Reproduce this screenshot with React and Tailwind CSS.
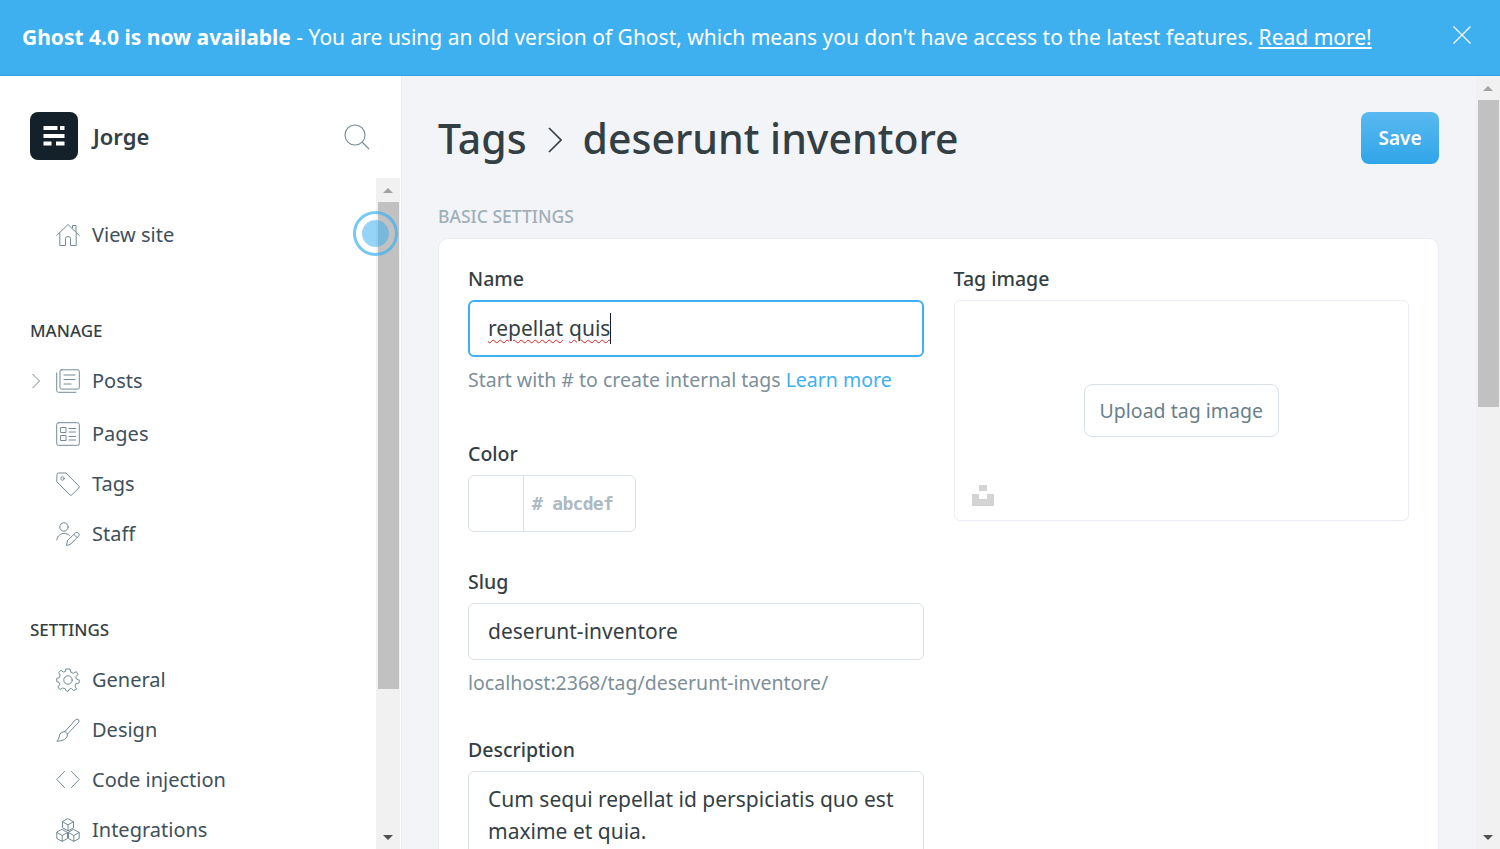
const sans = { };

function Icon({ children, className = "" }) {
  return (
    <svg viewBox="0 0 24 24" fill="none" stroke="#738a94" strokeWidth="1" strokeLinecap="round" strokeLinejoin="round" className={"w-6 h-6 shrink-0 " + className}>
      {children}
    </svg>
  );
}

const HomeIcon = () => (
  <Icon>
    <path d="M0.7 12.5 L12 1.5 L23.3 12.5" />
    <path d="M3.8 10 V22.5 H9.5 V15.5 Q9.5 13.5 12 13.5 Q14.5 13.5 14.5 15.5 V22.5 H20.2 V10" />
    <path d="M16.5 5 V2.5 H20 V8.5" />
  </Icon>
);
const PostsIcon = () => (
  <Icon>
    <rect x="4" y="0.8" width="19.3" height="19.3" rx="1.5" />
    <path d="M0.7 4 V21.5 Q0.7 23.3 2.5 23.3 H20" />
    <path d="M8 6 H19 M8 10.5 H19 M8 15 H15" />
  </Icon>
);
const PagesIcon = () => (
  <Icon>
    <rect x="0.7" y="0.7" width="22.6" height="22.6" rx="2" />
    <rect x="5" y="5.5" width="5" height="5" />
    <rect x="5" y="13.5" width="5" height="5" />
    <path d="M13 6.5 H19.5 M13 10 H19.5 M13 14.5 H19.5 M13 18 H19.5" />
  </Icon>
);
const TagIcon = () => (
  <Icon>
    <path d="M1 2.5 Q1 1 2.5 1 H10 L23 14.2 Q23.6 15 23 15.8 L15.6 23 Q14.8 23.6 14 23 L1 10 Z" />
    <circle cx="6.5" cy="6.5" r="1.7" />
  </Icon>
);
const StaffIcon = () => (
  <Icon>
    <circle cx="8" cy="5" r="4.2" />
    <path d="M0.8 18 C1.5 13 5 11.5 8 11.5 C10 11.5 12 12 13.5 13.5" />
    <path d="M10.5 23.3 L11.5 18.5 L19.5 10.8 Q21 9.5 22.5 11 Q24 12.5 22.7 14 L15 21.8 Z" />
    <path d="M18 12.5 L21 15.5" />
  </Icon>
);
const GearIcon = () => (
  <Icon>
    <circle cx="12" cy="12" r="4.2" />
    <path d="M10 1 H14 L14.8 4.2 L17.4 5.3 L20.2 3.6 L22 6.5 L19.8 8.8 L20.4 11 L23.3 12 L23 15 L20 15.8 L19 18.2 L20.6 21 L17.6 22.6 L15.4 20.4 L13.5 21 L12 23.3 L10.3 23 L9 20.6 L6.6 20 L4 21.6 L1.8 19 L3.8 16.6 L3 14.5 L0.7 13.5 V10.5 L3.4 9.5 L4.2 7 L2.6 4.6 L5 2.4 L7.6 4 L9.4 3.4 Z" />
  </Icon>
);
const BrushIcon = () => (
  <Icon>
    <path d="M9 13.5 L19.5 1.8 Q21 0.5 22.5 1.6 Q23.8 3 22.5 4.5 L11.5 16" />
    <path d="M9 13.5 L11.5 16 Q12 19.5 8.5 21.5 Q5 23.3 0.8 23.2 Q3 21.5 3.3 18 Q3.8 14 9 13.5 Z" />
  </Icon>
);
const CodeIcon = () => (
  <Icon>
    <path d="M8.5 3.5 L0.8 11.5 L8.5 19.5 M15.5 3.5 L23.2 11.5 L15.5 19.5" />
  </Icon>
);
const BoxesIcon = () => (
  <Icon>
    <path d="M12 0.8 L17.5 3.8 V9.8 L12 12.8 L6.5 9.8 V3.8 Z M6.5 3.8 L12 6.8 L17.5 3.8 M12 6.8 V12.8" />
    <path d="M6.2 11.5 L11.5 14.5 V20.5 L6.2 23.4 L0.8 20.5 V14.5 Z M0.8 14.5 L6.2 17.5 L11.5 14.5 M6.2 17.5 V23.4" />
    <path d="M17.8 11.5 L23.2 14.5 V20.5 L17.8 23.4 L12.5 20.5 V14.5 Z M12.5 14.5 L17.8 17.5 L23.2 14.5 M17.8 17.5 V23.4" />
  </Icon>
);

function NavItem({ icon, label, chevron, className = "" }) {
  return (
    <div className={"relative flex items-center h-[50px] pl-[56px] gap-3 text-[#40505a] " + className}>
      {chevron && (
        <svg viewBox="0 0 10 16" fill="none" stroke="#738a94" strokeWidth="1" className="absolute left-[31px] w-[10px] h-4">
          <path d="M1.5 1 L8.5 8 L1.5 15" />
        </svg>
      )}
      {icon}
      <span className="text-[20px] leading-[30px]">{label}</span>
    </div>
  );
}

function Scrollbar({ top, thumbH, className = "" }) {
  return (
    <div className={"w-6 shrink-0 flex flex-col items-center bg-[#f1f1f1] overflow-hidden " + className}>
      <div className="h-6 shrink-0 flex items-center justify-center">
        <div className="w-0 h-0 border-x-[5px] border-x-transparent border-b-[5px] border-b-[#a3a3a3]" />
      </div>
      <div className="w-[21px] shrink-0 bg-[#c1c1c1]" style={{ marginTop: top, height: thumbH }} />
      <div className="mt-auto h-6 shrink-0 flex items-center justify-center">
        <div className="w-0 h-0 border-x-[5px] border-x-transparent border-t-[5px] border-t-[#505050]" />
      </div>
    </div>
  );
}

function Label({ children }) {
  return <label className="block text-[19.5px] leading-[26px] font-medium text-[#343f44] mb-[8px]">{children}</label>;
}

export default function App() {
  return (
    <div className="h-screen flex flex-col overflow-hidden bg-white font-['Noto_Sans','Open_Sans',sans-serif] text-[#343f44]">
      <div className="h-[76px] shrink-0 flex items-center bg-[#3eb0ef] border-b border-[#2fa0df] text-white pl-[22px] pr-[29px]">
        <p className="flex-1 text-[21px] leading-[28px] pb-[1px] whitespace-nowrap">
          <b className="font-bold">Ghost 4.0 is now available</b> - You are using an old version of Ghost, which means you don't have access to the latest features. <a className="underline">Read more!</a>
        </p>
        <svg viewBox="0 0 18 18" stroke="white" strokeWidth="1.2" className="w-[18px] h-[18px] -mt-[5px]">
          <path d="M0.5 0.5 L17.5 17.5 M17.5 0.5 L0.5 17.5" />
        </svg>
      </div>

      <div className="flex-1 min-h-0 flex">
        <aside className="relative w-[402px] shrink-0 flex flex-col bg-white border-r border-[#e5eff5]">
          <div className="h-[102px] shrink-0 flex items-start pt-[36px] pl-[30px] pr-[31px]">
            <div className="w-12 h-12 rounded-[8px] bg-[#15212a] flex items-center justify-center">
              <svg viewBox="0 0 22 20" fill="white" className="w-[22px] h-5">
                <rect x="0.5" y="0" width="14" height="4" />
                <rect x="17" y="0" width="4.5" height="4" />
                <rect x="0.5" y="8" width="21" height="4" />
                <rect x="0.5" y="15.5" width="8" height="4" />
                <rect x="13" y="15.5" width="8.5" height="4" />
              </svg>
            </div>
            <span className="ml-[15px] mt-[8px] text-[22px] leading-[32px] font-semibold text-[#343f44]">Jorge</span>
            <svg viewBox="0 0 26 26" fill="none" stroke="#738a94" strokeWidth="1.1" className="ml-auto mt-[12px] w-[26px] h-[26px]">
              <circle cx="11" cy="11" r="10" />
              <path d="M18 18 L25 25" />
            </svg>
          </div>

          <div className="flex-1 min-h-0 flex">
            <nav className="flex-1 min-w-0 overflow-hidden pt-[32px]">
              <NavItem icon={<HomeIcon />} label="View site" />
              <h3 className="mt-[46px] pl-[30px] h-[50px] text-[17px] leading-[50px] font-medium text-[#343f44]">MANAGE</h3>
              <NavItem icon={<PostsIcon />} label="Posts" chevron className="mb-[3px]" />
              <NavItem icon={<PagesIcon />} label="Pages" />
              <NavItem icon={<TagIcon />} label="Tags" />
              <NavItem icon={<StaffIcon />} label="Staff" />
              <h3 className="mt-[46px] pl-[30px] h-[50px] text-[17px] leading-[50px] font-medium text-[#343f44]">SETTINGS</h3>
              <NavItem icon={<GearIcon />} label="General" />
              <NavItem icon={<BrushIcon />} label="Design" />
              <NavItem icon={<CodeIcon />} label="Code injection" />
              <NavItem icon={<BoxesIcon />} label="Integrations" />
            </nav>
            <Scrollbar top={0} thumbH={487} className="mr-px" />
          </div>

          <div className="absolute left-[353px] top-[135px] w-[45px] h-[45px] rounded-full border-[3px] border-[#3eb0ef]/70 flex items-center justify-center">
            <div className="w-[27px] h-[27px] rounded-full bg-[#3eb0ef]/55" />
          </div>
        </aside>

        <main className="flex-1 min-w-0 bg-[#f2f4f8] overflow-hidden pl-[36px] pr-[37px]">
          <div className="flex items-start justify-between pt-[36px] h-[122px]">
            <h1 className="flex items-center text-[41px] leading-[52px] font-medium text-[#343f44]">
              Tags
              <svg viewBox="0 0 14 26" fill="none" stroke="#343f44" strokeWidth="1.6" className="w-[14px] h-[26px] mx-[21px] mt-[4px]">
                <path d="M1 1 L13 13 L1 25" />
              </svg>
              deserunt inventore
            </h1>
            <button className="w-[78px] h-[52px] rounded-[8px] bg-gradient-to-b from-[#58b9f0] to-[#2ea5e8] text-white text-[19px] font-semibold">Save</button>
          </div>

          <h4 className="h-[40px] text-[17.5px] leading-[36px] font-medium text-[#a0afb8]">BASIC SETTINGS</h4>

          <section className="bg-white rounded-[10px] border border-[#e8eef3] px-[29px] pt-[27px] pb-8 grid grid-cols-2 gap-x-[30px] items-start">
            <div>
              <Label>Name</Label>
              <div className="h-[57px] rounded-[6px] border-2 border-[#3eb0ef] px-[18px] flex items-center text-[21px] text-[#343f44]">
                <span className="underline decoration-wavy decoration-[#e02020] decoration-1 underline-offset-[3px]">repellat</span>
                <span className="ml-[6px] underline decoration-wavy decoration-[#e02020] decoration-1 underline-offset-[3px]">quis</span>
                <span className="w-px h-[31px] bg-[#15212a]" />
              </div>
              <p className="mt-[8px] h-[50px] text-[19.5px] leading-[30px] text-[#7d8f99] whitespace-nowrap">
                Start with # to create internal tags <a className="text-[#3eb0ef]">Learn more</a>
              </p>

              <div className="mt-[26px]">
                <Label>Color</Label>
                <div className="w-[168px] h-[57px] flex rounded-[6px] border border-[#dae2e7]">
                  <div className="w-[55px] border-r border-[#dae2e7]" />
                  <div className="pl-[8px] flex items-center text-[18px] font-semibold font-['DejaVu_Sans_Mono',monospace] tracking-[-0.7px] text-[#aebac2]">
                    # abcdef
                  </div>
                </div>
              </div>

              <div className="mt-[37px]">
                <Label>Slug</Label>
                <div className="h-[57px] rounded-[6px] border border-[#dae2e7] px-[19px] flex items-center text-[21px]">deserunt-inventore</div>
                <p className="mt-[8px] text-[19.5px] leading-[30px] text-[#7d8f99]">localhost:2368/tag/deserunt-inventore/</p>
              </div>

              <div className="mt-[39px]">
                <Label>Description</Label>
                <div className="h-[140px] rounded-[6px] border border-[#dae2e7] px-[19px] py-[11px] text-[21px] leading-[32px]">
                  Cum sequi repellat id perspiciatis quo est maxime et quia.
                </div>
              </div>
            </div>

            <div>
              <Label>Tag image</Label>
              <div className="relative h-[221px] rounded-[6px] border border-[#e8eef3] flex items-center justify-center">
                <button className="w-[195px] h-[53px] rounded-[8px] border border-[#dae2e7] bg-white text-[19.5px] text-[#6a7f8a]">Upload tag image</button>
                <svg viewBox="0 0 22 21" fill="#d4d4d4" className="absolute left-[17px] bottom-[14px] w-[22px] h-[21px]">
                  <rect x="7" y="0" width="8" height="6" />
                  <path d="M0 9 H7 V14 H15 V9 H22 V21 H0 Z" />
                </svg>
              </div>
            </div>
          </section>
        </main>

        <Scrollbar top={0} thumbH={307} />
      </div>
    </div>
  );
}
